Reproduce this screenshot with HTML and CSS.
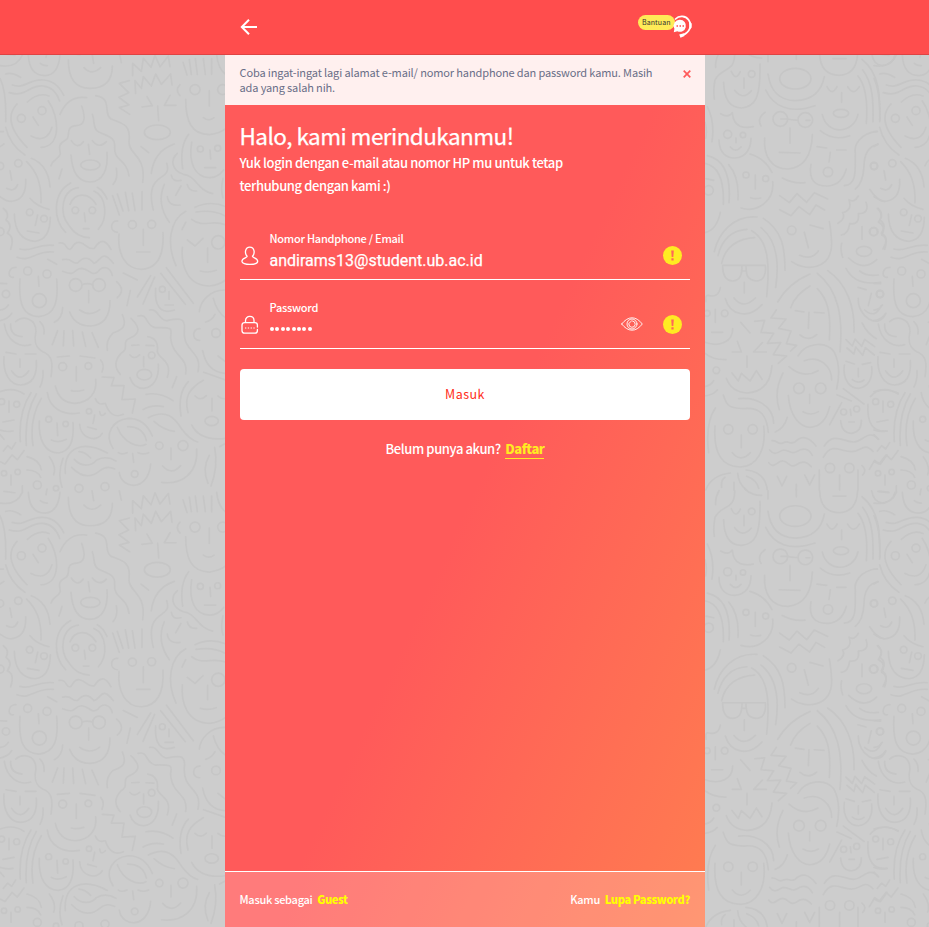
FILE: index.html
```html
<!DOCTYPE html>
<html lang="id">
<head>
<meta charset="utf-8">
<title>Masuk</title>
<link rel="stylesheet" href="styles.css">
</head>
<body>
<svg class="doodles" width="929" height="927" viewBox="0 0 929 927" aria-hidden="true">
  <defs>
    <g id="left" transform="translate(0 50) scale(.33333)">
      <path d="M0 47Q50 55 67 15V-5M12 12L45 16M85 15Q88 77 135 77Q175 75 180 15M121 40Q130 48 142 47M138 22L141 5M205 30Q205 115 270 115Q337 115 337 48M252 53Q275 78 302 53M276 10L281 40M358 10L364 38"/>
      <path d="M398 77V40L424 64L430 25L453 52L465 16L480 50L505 18L510 50M405 92L407 130M405 92L424 115L430 80L454 108L467 72L484 103L512 72L516 105M388 92L358 100L386 128L357 142L387 165L358 173L389 193M441 140L457 167L426 171M510 136L493 166H528M473 168L476 212M549 37L561 75M568 29L574 73M586 26L592 73M610 26L616 73M635 26V73"/>
      <ellipse cx="472" cy="247" rx="39" ry="22"/><circle cx="585" cy="119" r="15"/><circle cx="668" cy="119" r="15"/>
      <path d="M557 148C557 215 575 253 628 254Q660 250 678 235M628 122V168M610 203Q627 216 642 203M540 104Q524 120 540 137M650 15Q654 55 676 73"/>
      <path d="M17 72Q35 65 62 82M0 85Q20 125 17 215M37 105C75 118 85 87 130 90Q170 92 191 136M28 128C80 143 85 104 130 108Q165 112 179 153M82 156Q115 125 147 138M17 232Q30 285 75 315M51 162C20 195 30 240 81 292M145 153C178 200 185 290 123 292M93 258Q140 282 156 232M99 201L115 226"/>
      <circle cx="64" cy="205" r="12"/><circle cx="126" cy="182" r="12"/>
      <path d="M180 193Q205 135 260 143M287 137C340 145 307 190 333 207C370 220 393 225 387 275C385 315 440 315 428 397M245 168Q265 225 230 227C190 230 216 260 197 270C170 285 180 295 181 312C175 330 160 325 153 347M277 193C285 215 278 235 295 245C325 260 345 260 344 290C340 335 380 325 387 378M214 272Q232 300 250 275M277 272Q298 298 319 275M265 283L269 313M213 315C216 360 230 395 270 396C310 395 325 355 321 307M186 357L177 386M349 355Q355 385 339 403"/><ellipse cx="271" cy="345" rx="29" ry="15"/>
      <circle cx="0" cy="348" r="11"/><circle cx="55" cy="340" r="11"/><path d="M30 362L35 390M20 415Q43 428 53 404M0 440Q25 458 40 453Q80 445 77 388M80 335C110 365 125 400 123 458M94 325Q145 345 150 411M90 445Q110 470 147 478M0 245H10M0 290L12 282"/>
      <path d="M423 290L446 308M454 370C460 320 485 295 523 282M500 340C512 375 485 375 468 395Q445 420 460 480M493 403Q468 460 508 517M566 253Q538 290 548 356M532 310C510 330 515 360 550 373C590 378 590 420 638 431M514 375Q517 397 543 391M562 404Q567 425 590 423M543 408L527 436M502 440Q506 470 540 465M575 277C565 340 585 382 629 383Q655 382 671 360M630 300L632 327M614 353H647M669 385Q661 420 669 443"/><circle cx="601" cy="297" r="9"/><circle cx="653" cy="295" r="9"/>
      <path d="M197 547C160 510 155 430 212 399M235 413C185 420 175 490 208 528Q230 562 268 563M210 463C225 428 265 425 288 463M292 412Q310 422 321 447M282 423C320 440 325 505 295 538M253 489L256 515M250 536H267"/><circle cx="226" cy="481" r="10"/><circle cx="277" cy="481" r="10"/>
      <path d="M338 437L358 495M352 432L369 483M376 427L386 482M397 430L405 482M426 425V480M357 552C352 610 375 658 425 658C475 655 492 610 489 548M430 538V586M410 606H450M353 513C330 510 328 545 352 547"/><circle cx="397" cy="524" r="12"/><circle cx="455" cy="523" r="12"/>
      <path d="M557 484C510 510 498 580 528 647M585 472Q630 450 678 470M588 486Q640 478 676 498M575 508C610 535 635 508 676 524M557 517L546 539M562 570L585 588L609 565M623 594V637M601 663Q625 670 649 661M547 592C543 645 560 706 628 708Q655 706 677 690"/><circle cx="655" cy="577" r="20"/>
      <path d="M43 492Q45 570 105 574Q150 570 151 502M113 495L106 526M82 543L117 549M10 475Q30 490 18 510Q40 525 22 550Q45 560 32 598"/><circle cx="89" cy="487" r="10"/><circle cx="132" cy="506" r="10"/><circle cx="0" cy="545" r="12"/>
      <path d="M60 597C95 608 110 580 160 586M51 622C95 638 105 600 160 606M143 628L170 643M177 579C203 575 195 600 210 598C220 595 218 575 238 577C260 580 260 600 283 595C305 560 320 575 333 598M188 629C218 622 213 643 233 639C250 620 265 620 282 640C305 632 305 595 340 640M188 664C230 682 220 655 245 655C270 658 275 680 293 666C308 645 330 650 337 676"/>
      <circle cx="227" cy="705" r="19"/><circle cx="297" cy="705" r="19"/><path d="M246 704Q262 698 278 704M266 722V758M239 780Q270 802 299 779M209 786Q225 828 270 828Q330 825 330 752M350 695Q378 720 352 743"/>
      <circle cx="83" cy="663" r="12"/><circle cx="141" cy="672" r="12"/><circle cx="118" cy="752" r="21"/><circle cx="18" cy="732" r="11"/><path d="M48 652C25 650 20 685 40 682M115 679L117 709M60 687C55 765 70 798 117 800C165 795 176 755 170 687M188 773Q187 805 163 817M0 700L20 701M0 780Q15 780 25 765M0 812Q25 807 35 790"/>
      <path d="M370 669L412 690M452 677L412 741M464 681L429 762M391 722L381 767M482 670L556 763M499 653L580 760M467 715C463 765 480 795 523 780M507 725V748M495 765H520M676 720C630 718 600 755 598 785M640 745Q650 785 676 803M645 793Q635 812 617 816"/><circle cx="487" cy="718" r="9"/>
      <path d="M47 815C70 795 108 805 108 845C100 880 110 895 128 905C155 915 160 935 153 980M32 822Q30 857 66 860M13 822C20 870 55 895 92 884M120 815Q135 830 132 852M18 907L48 912M76 912H108M60 927V952M35 963Q60 1000 86 963M12 920C8 970 30 1005 62 1005C98 1003 112 975 109 932M129 962Q131 990 120 1011"/>
      <path d="M173 842L157 884M192 842L190 887M218 842L221 888M247 846L257 889M276 848L295 892M172 921L208 918M240 918L285 924M229 950V993M214 1022Q230 1026 251 1020M166 1008Q178 1059 225 1060C268 1058 292 1028 287 988M302 930Q315 945 306 966"/><circle cx="188" cy="950" r="12"/><circle cx="265" cy="948" r="10"/>
      <path d="M367 794C385 835 360 840 338 850Q317 870 322 901M393 805C430 840 410 855 390 864C362 875 390 897 363 910C345 930 340 950 361 973M414 798C445 790 435 825 465 833C540 830 503 845 514 875C520 920 565 920 557 972M449 780C475 775 475 810 500 812C535 805 558 800 553 840C548 910 608 900 594 965M443 860Q477 865 472 905C478 930 518 930 502 982M395 886L417 885M438 886L462 887M390 915Q402 930 419 915M431 920V950M390 983Q400 1015 432 1015C460 1012 478 985 475 942M530 980L517 1013"/><circle cx="455" cy="916" r="10"/><ellipse cx="433" cy="974" rx="22" ry="16"/>
      <circle cx="648" cy="849" r="13"/><path d="M600 836C575 835 575 872 599 871M608 902Q620 965 674 970M654 918L676 935M611 967L677 990M307 981L342 983L334 1007H372L366 1049L406 1047L397 1089M565 995Q532 1030 543 1098M610 991C568 1015 552 1040 564 1088M585 1038Q602 1055 619 1037M654 1038Q664 1048 677 1046M636 1045V1083M575 1125Q600 1175 676 1165"/><ellipse cx="635" cy="1113" rx="20" ry="14"/>
      <path d="M0 1025Q40 1010 72 1032M27 1053V1087M9 1116L42 1110M0 1140Q20 1147 39 1143M93 1028C65 1070 57 1120 61 1175M109 1032C80 1080 75 1130 79 1186M124 1045C97 1090 92 1140 99 1187M0 1154L12 1168M142 1028C148 1075 190 1098 238 1089M286 1046C295 1070 310 1060 316 1060C325 1090 345 1105 370 1093"/><circle cx="5" cy="1055" r="9"/><circle cx="50" cy="1063" r="9"/>
      <path d="M118 1113C115 1170 135 1208 175 1209C210 1205 223 1170 219 1118M171 1119L173 1157M154 1170Q175 1181 199 1168M239 1123C240 1165 290 1180 307 1150M284 1095L279 1120M263 1131L289 1138M299 1085Q302 1105 316 1090"/><circle cx="146" cy="1108" r="9"/><circle cx="197" cy="1122" r="8"/><circle cx="267" cy="1084" r="8"/>
      <path d="M339 1195C310 1150 340 1110 385 1105Q435 1105 457 1158M352 1132C370 1180 415 1195 438 1183M383 1130Q430 1130 439 1172M429 1079Q455 1063 490 1070M438 1033Q480 1025 519 1052M445 1103C500 1075 525 1105 545 1137Q570 1170 593 1176M462 1114Q490 1140 523 1144M355 1208Q365 1215 381 1208M414 1208Q430 1215 446 1208M398 1211L401 1237M358 1268C365 1320 445 1325 452 1242M513 1194V1229M488 1248Q515 1278 542 1247M485 1297C545 1305 595 1270 590 1197M628 1216Q605 1255 624 1300M644 1192Q655 1250 633 1308M659 1190L677 1180"/><circle cx="404" cy="1272" r="10"/><circle cx="478" cy="1187" r="11"/><circle cx="549" cy="1187" r="15"/>
      <path d="M322 1209C250 1170 190 1190 196 1270M237 1205Q255 1205 272 1224M223 1228C245 1253 275 1248 290 1230Q320 1215 348 1233M215 1252C245 1283 275 1283 300 1262Q320 1245 344 1257M189 1225Q172 1270 186 1312M81 1220Q120 1230 124 1260M81 1260Q112 1260 122 1282M148 1220Q170 1250 161 1274M10 1203L23 1187L35 1197L47 1178M0 1235L15 1242L36 1215L52 1229L72 1202M33 1275V1305"/><circle cx="12" cy="1270" r="8"/><circle cx="53" cy="1266" r="8"/><circle cx="112" cy="1305" r="12"/><circle cx="168" cy="1315" r="8"/><circle cx="237" cy="1315" r="12"/><circle cx="315" cy="1310" r="12"/>
    </g>
    <g id="right" transform="translate(700 50) scale(.33333)">
      <path d="M104 10C105 70 65 50 45 90Q39 120 43 147M57 10Q45 30 47 52M135 5Q155 24 185 24M94 64Q107 95 121 65M132 84V115M104 121Q128 153 154 122M71 97C72 150 90 174 125 174C165 170 182 145 180 42"/><circle cx="155" cy="72" r="10"/>
      <ellipse cx="286" cy="86" rx="47" ry="31"/><path d="M204 10V35M204 72Q215 150 285 152Q360 150 373 80M197 120C220 170 270 193 345 167M289 5V28M359 10Q360 75 418 76Q470 74 473 10M399 26H438M381 110Q396 140 411 110M443 110Q460 140 478 110M425 128V157M367 194C380 255 460 255 474 193M361 242Q400 275 449 257M474 78C500 110 503 165 499 220M488 60C520 100 520 160 519 215M486 28C540 70 540 140 540 210"/><ellipse cx="423" cy="190" rx="23" ry="12"/>
      <path d="M515 10Q520 45 548 47Q580 42 585 15M537 12L566 14"/>
      <path d="M62 191Q85 205 97 188C100 235 135 235 160 230M22 170Q45 215 36 275M108 264V278M91 291Q107 310 123 291M57 270C58 310 80 325 105 324C138 322 153 295 153 265M195 187Q170 205 183 228M15 217Q22 240 17 265"/><circle cx="83" cy="253" r="12"/><circle cx="129" cy="255" r="8"/>
      <circle cx="241" cy="207" r="22"/><circle cx="316" cy="210" r="22"/><path d="M243 207H262Q278 211 293 210M318 211H330M270 234V280M238 307L300 309M194 264C190 320 215 357 264 357C315 352 335 315 337 254M351 290L380 294M410 300H438M391 307L387 336M333 343C325 390 345 409 384 408Q425 405 439 357M531 244C480 250 461 285 466 310C464 345 475 405 433 407M534 283C500 290 492 320 492 350Q489 400 466 417"/><circle cx="384" cy="366" r="14"/>
      <circle cx="522" cy="348" r="10"/><path d="M509 418Q530 450 552 454"/>
      <circle cx="138" cy="375" r="9"/><circle cx="197" cy="386" r="9"/><circle cx="26" cy="421" r="14"/><path d="M150 312Q195 325 216 367M166 375V417M152 443Q165 448 182 444M123 474C175 490 224 450 218 395M15 340C65 350 72 410 70 463M22 317C80 330 92 390 87 458M86 344Q118 380 114 450M18 386L41 391M15 548Q50 540 61 487M247 384Q280 402 315 398M239 437L268 458L291 431L320 457L343 428L383 447M239 479L273 497L297 470L329 494L348 465L374 480"/>
      <path d="M43 605C55 550 100 495 171 501M54 617C65 570 95 540 141 538M65 640C75 590 115 565 164 563M155 542C205 570 210 640 200 740M183 533C230 570 238 640 227 712M190 505C245 540 255 590 255 661M133 697V729M102 744Q130 780 166 744M76 746C90 795 145 810 186 764M68 646H196C199 675 190 693 168 693C145 690 138 680 138 647M68 646C67 675 78 693 98 693C119 691 126 678 126 647M126 663H138"/>
      <circle cx="275" cy="541" r="13"/><path d="M330 525L369 536M313 547L325 593M299 616Q335 632 355 603M275 635C315 665 395 660 395 580Q393 540 388 515M330 672Q265 700 233 756M330 708Q285 735 272 773M352 716C380 745 394 780 388 870M352 670C415 720 430 800 420 906M383 662C440 700 465 770 462 847M286 782L312 786M343 787L372 789M327 787L325 835M300 855Q325 876 350 854"/>
      <path d="M475 438Q463 460 447 449Q458 480 428 488Q438 505 414 520M498 457Q510 490 475 491Q480 525 449 521Q445 553 424 555M535 475Q552 497 535 516Q560 530 545 555Q568 565 549 597M486 530V568M446 624Q490 667 530 629M425 580Q420 600 428 622M438 655Q465 708 542 697M479 663Q500 680 535 675"/><circle cx="520" cy="545" r="12"/><ellipse cx="492" cy="604" rx="23" ry="15"/>
      <circle cx="540" cy="732" r="10"/><path d="M474 712L498 719M514 730L505 767M494 780Q525 808 544 767M475 745C472 800 535 840 557 792M486 819Q503 853 529 866"/>
      <circle cx="21" cy="790" r="9"/><circle cx="74" cy="790" r="10"/><path d="M18 755Q15 735 24 736Q55 745 61 713M46 778V817M35 847H68M15 877C60 893 98 875 98 836M122 817L150 849M15 910Q40 930 78 929M112 874L124 906H97M187 878L161 906H199M141 918V952M96 969L115 993L124 970L150 993L169 962L186 988M79 985C90 1015 115 1028 142 1029Q210 1025 216 947M15 1010Q35 1005 41 992M15 1038Q40 1034 52 1020"/><circle cx="49" cy="961" r="10"/>
      <path d="M164 814L194 811L183 847L221 850L202 880L242 878L220 914L260 918L235 940M229 780L213 804L258 807L236 835L273 843L259 881L290 886L272 903M294 918C315 880 375 870 402 905Q425 950 410 1017M313 932C360 915 395 950 395 990M267 950Q310 988 354 962M329 1033V1060M309 1085Q333 1099 355 1085M265 1037C270 1100 300 1131 330 1132Q375 1130 389 1070M249 969Q220 1025 238 1079M262 1102Q253 1135 226 1146"/><circle cx="297" cy="1015" r="16"/><circle cx="362" cy="1015" r="16"/>
      <path d="M438 869L457 888L465 867L485 889L494 868L524 890M441 894L462 912L467 891L488 916L496 893L523 915M438 934L463 942M487 943L512 938M475 955V980M457 989Q475 1003 492 990M433 945C427 990 450 1015 475 1015C507 1012 519 980 515 950M411 1034L454 1053M430 1016L492 1062M425 1058L389 1124"/>
      <circle cx="431" cy="1086" r="9"/><circle cx="470" cy="1077" r="9"/><path d="M451 1078L453 1096M447 1116H463M422 1112Q425 1150 456 1150Q485 1145 484 1111M511 1040Q540 1005 595 1030M504 1063C500 1120 520 1148 561 1143"/>
      <path d="M70 1035C82 1075 95 1073 130 1076C180 1070 200 1095 205 1147M116 1046C165 1040 220 1065 221 1120M46 1074Q15 1120 26 1208M45 1128C40 1210 65 1250 121 1251C170 1250 200 1200 191 1128M124 1155V1193M97 1208Q123 1239 151 1208M17 1320Q35 1275 91 1269M65 1312Q62 1290 75 1282M113 1270Q115 1300 139 1320M138 1260Q195 1265 202 1320M140 1279Q170 1290 176 1315M102 1297V1320"/><circle cx="85" cy="1138" r="14"/><circle cx="158" cy="1138" r="14"/>
      <path d="M216 1172C232 1170 235 1187 250 1178C270 1170 265 1185 285 1176Q315 1145 348 1188M209 1200C225 1220 235 1205 250 1200C270 1200 275 1215 290 1205Q320 1185 337 1216M206 1238C220 1260 235 1230 249 1233C265 1235 270 1255 288 1245Q312 1225 334 1250M373 1188C400 1145 430 1175 460 1176C490 1175 505 1135 536 1168M370 1222C395 1175 420 1205 455 1205C485 1205 490 1175 519 1204M232 1279L246 1308L260 1279M314 1275L329 1305L344 1275M289 1303V1320M358 1260V1320M474 1260V1320M419 1275V1320M486 1247Q502 1260 488 1275"/><circle cx="390" cy="1254" r="14"/><circle cx="448" cy="1254" r="14"/>
      <path d="M508 1258L524 1231L541 1243L561 1215"/>
    </g>
    <g id="tile"><use href="#left"/><use href="#right"/><use href="#left" x="874"/></g>
  </defs>
  <use href="#tile" y="-437.4"/><use href="#tile"/><use href="#tile" y="437.4"/>
</svg>

<header class="topbar">
  <div class="topbar-inner">
    <svg class="back" width="18" height="18" viewBox="0 0 18 18"><path d="M17 9H2M9 1.8L1.8 9L9 16.2"/></svg>
    <div class="help">
      <span class="help-label">Bantuan</span>
      <svg class="help-icon" width="22" height="24" viewBox="0 0 22 24">
        <path class="band" d="M4.500 4C8 .3 14.500 .3 17.700 5C21.500 10.500 18.500 17.500 12 20"/>
        <path class="fill" d="M18 6L20.700 8.500V12.500L18.500 15ZM8.200 19.500L13 18.300L13.500 21L9.500 22.800ZM9 4.800A6 6 0 1 1 6.300 16.200L2.800 17.300L3.400 13.700A6 6 0 0 1 9 4.800Z"/>
        <path class="dots" d="M5.500 11H7M8.500 11H10M11.500 11H13"/>
      </svg>
    </div>
  </div>
</header>

<main class="panel">
  <div class="alert">
    <p>Coba ingat-ingat lagi alamat e-mail/ nomor handphone dan password kamu. Masih ada yang salah nih.</p>
    <svg width="8" height="8" viewBox="0 0 8 8"><path d="M.7 .7L7.300 7.300M7.300 .7L.7 7.300"/></svg>
  </div>
  <section class="content">
    <h1>Halo, kami merindukanmu!</h1>
    <p class="lead">Yuk login dengan e-mail atau nomor HP mu untuk tetap terhubung dengan kami :)</p>
    <div class="field">
      <svg class="lead-icon" width="20" height="20" viewBox="0 0 20 20"><path d="M7.200 10.300C4.300 7.500 5 1.200 9.800 1.200C14.600 1.200 15.300 7.500 12.400 10.300C12.400 12 17.700 11.700 17.700 15.300C17.700 17.200 14 18.400 9.800 18.400C5.600 18.400 1.900 17.200 1.900 15.300C1.900 11.700 7.200 12 7.200 10.300Z"/></svg>
      <div class="field-body"><span class="label">Nomor Handphone / Email</span><span class="value">andirams13@student.ub.ac.id</span></div>
      <svg class="warn" width="19" height="19" viewBox="0 0 19 19"><circle cx="9.500" cy="9.500" r="9.500"/><path d="M8.200 4.500H10.800L10.300 11H8.700ZM8.400 12.300H10.600V14.400H8.400Z"/></svg>
    </div>
    <div class="field password">
      <svg class="lead-icon" width="20" height="20" viewBox="0 0 20 20"><path d="M5.500 7.500V5.500C5.500 0 14 0 14 5.500V7.500M17.400 12V10C17.400 8.500 16.500 7.700 15 7.700H4.500C3 7.700 2 8.500 2 10V15.500C2 17.500 3 18.200 4.500 18.200H15C16.500 18.200 17.400 17.200 17.400 15.500V14.500"/><path class="pin" d="M5 13H6.300M7.800 13H9.100M10.600 13H11.900M13.400 13H14.700"/></svg>
      <div class="field-body"><span class="label">Password</span><span class="mask"><i></i><i></i><i></i><i></i><i></i><i></i><i></i><i></i></span></div>
      <svg class="eye" width="22" height="14" viewBox="0 0 22 14"><path d="M.7 7Q5.500 .8 11 .8T21.300 7Q16.500 13.200 11 13.200T.7 7Z"/><circle cx="11" cy="7" r="5"/><path d="M7.800 7A3.200 3.200 0 1 0 11.500 3.900M7.800 6.500L10.500 4"/></svg>
      <svg class="warn" width="19" height="19" viewBox="0 0 19 19"><circle cx="9.500" cy="9.500" r="9.500"/><path d="M8.200 4.500H10.800L10.300 11H8.700ZM8.400 12.300H10.600V14.400H8.400Z"/></svg>
    </div>
    <button class="submit">Masuk</button>
    <p class="signup">Belum punya akun? <a>Daftar</a></p>
  </section>
  <footer class="bottom">
    <p>Masuk sebagai <a>Guest</a></p>
    <p>Kamu <a>Lupa Password?</a></p>
  </footer>
</main>
</body>
</html>
```
FILE: styles.css
```css
* { box-sizing: border-box; }
body {
  margin: 0;
  height: 927px;
  display: flex;
  flex-direction: column;
  overflow: hidden;
  background: #cdcdcd;
  font-family: "Noto Sans CJK JP", sans-serif;
  color: #fff;
}
h1, p { margin: 0; }
svg { display: block; flex: none; fill: none; stroke-linecap: round; stroke-linejoin: round; }
.doodles { position: absolute; inset: 0; z-index: -1; stroke: #c6c6c6; stroke-width: 5; }

.topbar { height: 55px; flex: none; background: #ff4d4d; border-bottom: 1px solid #df4343; }
.topbar-inner { width: 480px; height: 54px; margin: 0 auto 0 225px; padding: 0 12px 0 15px; display: flex; align-items: center; justify-content: space-between; }
.back { stroke: #fff; stroke-width: 2; stroke-linecap: butt; stroke-linejoin: miter; }
.help { display: flex; align-items: flex-start; }
.help-label { width: 37px; height: 15px; margin: 0 -4px 0 0; padding-left: 4px; border-radius: 8px; background: #ffeb57; color: #333; font-size: 7px; line-height: 14px; letter-spacing: .1px; }
.help-icon .band { stroke: #fff; stroke-width: 1.700; }
.help-icon .fill { fill: #fff; }
.help-icon .dots { stroke: #ff4d4d; stroke-width: 1.500; stroke-linecap: butt; }

.panel { width: 480px; margin-left: 225px; flex: 1; display: flex; flex-direction: column; background: linear-gradient(115deg, #ff5a5a 51%, #ff7d50); }
.alert { height: 50px; padding: 10px 14.500px 0 14.500px; display: flex; justify-content: space-between; background: #fff0ef; color: #696e87; font-size: 11px; line-height: 15px; letter-spacing: -.13px; }
.alert p { width: 425px; }
.alert svg { margin-top: 4.500px; stroke: #ff5a5a; stroke-width: 1.700; stroke-linecap: butt; }

.content { flex: 1; padding: 16px 15px 0; }
h1 { height: 30px; margin-left: -.5px; font-size: 22.500px; line-height: 28px; font-weight: 400; letter-spacing: -.54px; -webkit-text-stroke: .25px #fff; white-space: nowrap; }
.lead { width: 345px; margin-left: -.5px; font-size: 13px; line-height: 23px; font-weight: 500; letter-spacing: -.38px; }
.field { height: 60px; display: flex; align-items: flex-start; border-bottom: 1px solid #fff; }
.lead + .field { margin-top: 23px; }
.password { height: 69px; padding-top: 9px; }
.lead-icon { margin-top: 26px; stroke: #fff; stroke-width: 1.300; }
.lead-icon .pin { stroke-width: 1; stroke-linecap: butt; }
.field-body { flex: 1; margin-left: 9px; display: flex; flex-direction: column; }
.label { margin: 9px 0 0 .5px; font-size: 11px; line-height: 18px; font-weight: 500; letter-spacing: -.25px; }
.value { margin: 2px 0 0 .5px; font-family: Roboto, sans-serif; font-size: 16px; line-height: 24px; -webkit-text-stroke: .25px #fff; }
.mask { display: flex; gap: 1.400px; margin: 11px 0 0 1px; }
.mask i { width: 4px; height: 4px; border-radius: 50%; background: #fff; }
.eye { margin: 28px 20px 0 0; stroke: #fff; stroke-width: .9; }
.warn { margin: 26px 8px 0 0; }
.warn circle { fill: #ffeb22; }
.warn path { fill: #ff6659; }
.submit { display: block; width: 450px; height: 51px; margin-top: 20px; padding: 0 0 1px; border: 0; border-radius: 4px; background: #fff; color: #ff2d20; font: 400 12.500px/50px "Noto Sans CJK JP", sans-serif; letter-spacing: .45px; }
.signup { margin-top: 17px; text-align: center; font-size: 13px; line-height: 23px; font-weight: 500; letter-spacing: -.4px; }
.signup a { display: inline-block; margin-left: 2px; line-height: 18px; font-weight: 900; color: #ffeb22; border-bottom: 1px solid; letter-spacing: -.45px; }
.bottom { height: 56px; padding: 0 15px 0 14.500px; display: flex; justify-content: space-between; border-top: 1px solid #fff; background: rgba(255,255,255,.2); background-clip: padding-box; font-size: 11px; line-height: 55px; font-weight: 500; letter-spacing: -.28px; }
.bottom a { margin-left: 2.500px; color: #ff0; font-weight: 900; letter-spacing: -.32px; }
```
